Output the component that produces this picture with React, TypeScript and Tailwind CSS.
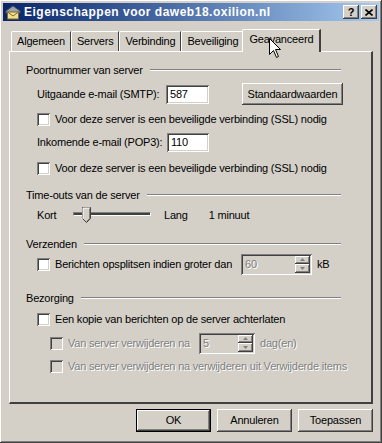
import React from 'react';

const raised =
  'shadow-[inset_-1px_-1px_0_#404040,inset_1px_1px_0_#ffffff,inset_-2px_-2px_0_#808080,inset_2px_2px_0_#d4d0c8]';
const sunken =
  'shadow-[inset_1px_1px_0_#808080,inset_-1px_-1px_0_#ffffff,inset_2px_2px_0_#404040,inset_-2px_-2px_0_#d4d0c8]';
const dis = 'text-[#808080] [text-shadow:1px_1px_0_#ffffff]';

function CheckBox({ disabled }: { disabled?: boolean }) {
  return <div className={`w-[13px] h-[13px] shrink-0 ${disabled ? 'bg-[#d4d0c8]' : 'bg-white'} ${sunken}`} />;
}

function GroupLabel({ text }: { text: string }) {
  return (
    <div className="flex items-center h-[14px] pl-[16px] pr-[30px]">
      <span className="whitespace-nowrap">{text}</span>
      <div className="ml-[7px] flex-1 h-[2px] border-t border-[#808080] border-b border-b-white" />
    </div>
  );
}

function Spinner({ value, width }: { value: string; width: string }) {
  return (
    <div className={`relative h-[21px] bg-[#d4d0c8] ${sunken} ${width} flex items-center`}>
      <span className={`pl-[4px] ${dis}`}>{value}</span>
      <div className="absolute right-[2px] top-[2px] bottom-[2px] w-[15px] flex flex-col">
        <div className={`flex-1 flex items-center justify-center ${raised}`}>
          <svg width="5" height="3" viewBox="0 0 5 3"><path d="M2.5 0 L5 3 L0 3Z" fill="#808080" /></svg>
        </div>
        <div className={`flex-1 flex items-center justify-center ${raised}`}>
          <svg width="5" height="3" viewBox="0 0 5 3"><path d="M0 0 L5 0 L2.5 3Z" fill="#808080" /></svg>
        </div>
      </div>
    </div>
  );
}

function Tab({ label, active }: { label: string; active?: boolean }) {
  if (active) {
    return (
      <div className="relative z-10 -ml-[2px] h-[23px] px-[6px] flex items-start pt-[4px] bg-[#d4d0c8] border-l border-t border-white border-r-2 border-r-[#404040] rounded-tl-[2px] mb-[-1px]">
        {label}
      </div>
    );
  }
  return (
    <div className="h-[20px] px-[5px] flex items-center border-l border-t border-white border-r border-r-[#404040] rounded-tl-[2px] self-end">
      {label}
    </div>
  );
}

function Btn({ label, def }: { label: string; def?: boolean }) {
  return (
    <div className={`w-[75px] h-[23px] flex items-center justify-center ${def ? 'border border-black' : ''}`}>
      <div className={`w-full h-full flex items-center justify-center bg-[#d4d0c8] ${raised}`}>{label}</div>
    </div>
  );
}

export default function App() {
  return (
    <div
      className={`w-[382px] h-[443px] bg-[#d4d0c8] ${raised} p-[3px] flex flex-col text-[11px] tracking-[-0.2px] text-black leading-none`}
      style={{ fontFamily: 'Tahoma, "Liberation Sans", Arial, sans-serif' }}
    >
      {/* title bar */}
      <div className="h-[18px] flex items-center bg-gradient-to-r from-[#0a246a] to-[#a6caf0] pl-[2px] pr-[2px]">
        <svg width="16" height="16" viewBox="0 0 16 16" className="shrink-0">
          <path d="M1 7 L8 2 L15 7 L15 9 L1 9Z" fill="#9aa3ad" stroke="#4a5560" strokeWidth="1" />
          <rect x="2.5" y="8" width="11" height="7" fill="#f4e08a" stroke="#7a6a30" strokeWidth="1" />
          <path d="M2.5 8 L8 12 L13.5 8" fill="none" stroke="#7a6a30" strokeWidth="1" />
        </svg>
        <span className="ml-[3px] text-white font-bold text-[12px] tracking-[0.5px]">Eigenschappen voor daweb18.oxilion.nl</span>
        <div className="ml-auto flex gap-[2px]">
          <div className={`w-[16px] h-[14px] bg-[#d4d0c8] ${raised} flex items-center justify-center font-bold text-[11px]`}>?</div>
          <div className={`w-[16px] h-[14px] bg-[#d4d0c8] ${raised} flex items-center justify-center`}>
            <svg width="8" height="7" viewBox="0 0 8 7"><path d="M0.5 0.5 L7.5 6.5 M7.5 0.5 L0.5 6.5" stroke="black" strokeWidth="1.6" /></svg>
          </div>
        </div>
      </div>

      {/* tabs */}
      <div className="relative mt-[7px] ml-[6px] mr-[6px] flex flex-col">
        <div className="flex h-[23px] items-end pl-[2px]">
          <Tab label="Algemeen" />
          <Tab label="Servers" />
          <Tab label="Verbinding" />
          <Tab label="Beveiliging" />
          <Tab label="Geavanceerd" active />
        </div>
        <div className="h-[353px] border-l border-t border-white border-r-2 border-r-[#404040] border-b-2 border-b-[#404040] flex flex-col">
          <div className="mt-[11px]"><GroupLabel text="Poortnummer van server" /></div>

          <div className="mt-[6px] ml-[27px] flex items-center h-[22px]">
            <span className="w-[129px] whitespace-nowrap">Uitgaande e-mail (SMTP):</span>
            <div className={`w-[43px] h-[19px] bg-white ${sunken} flex items-center pl-[4px]`}>587</div>
            <div className="ml-[33px]"><div className={`w-[101px] h-[22px] flex items-center justify-center ${raised}`}>Standaardwaarden</div></div>
          </div>

          <div className="mt-[7px] ml-[27px] flex items-center h-[14px] gap-[5px]">
            <CheckBox />
            <span className="whitespace-nowrap">Voor deze server is een beveiligde verbinding (SSL) nodig</span>
          </div>

          <div className="mt-[6px] ml-[27px] flex items-center h-[20px]">
            <span className="w-[130px] whitespace-nowrap">Inkomende e-mail (POP3):</span>
            <div className={`w-[42px] h-[19px] bg-white ${sunken} flex items-center pl-[4px]`}>110</div>
          </div>

          <div className="mt-[9px] ml-[27px] flex items-center h-[14px] gap-[5px]">
            <CheckBox />
            <span className="whitespace-nowrap">Voor deze server is een beveiligde verbinding (SSL) nodig</span>
          </div>

          <div className="mt-[13px]"><GroupLabel text="Time-outs van de server" /></div>

          <div className="mt-[4px] ml-[27px] flex items-center h-[18px]">
            <span className="w-[36px]">Kort</span>
            <div className="relative w-[78px] h-[18px]">
              <div className="absolute left-0 right-0 top-[6px] h-[4px] border-t border-l border-[#808080] border-b border-r border-b-white border-r-white bg-[#404040]" />
              <svg className="absolute left-[9px] top-[1px]" width="9" height="16" viewBox="0 0 9 16">
                <path d="M0.5 0.5 L8.5 0.5 L8.5 11.5 L4.5 15.5 L0.5 11.5Z" fill="#d4d0c8" stroke="#404040" strokeWidth="1" />
                <path d="M1 12 L1 1 L8 1" fill="none" stroke="#ffffff" strokeWidth="1" />
                <path d="M7.5 1.5 L7.5 11.5 L4.5 14.5" fill="none" stroke="#808080" strokeWidth="1" />
              </svg>
            </div>
            <span className="ml-[13px]">Lang</span>
            <span className="ml-[21px]">1 minuut</span>
          </div>

          <div className="mt-[13px]"><GroupLabel text="Verzenden" /></div>

          <div className="mt-[2px] ml-[27px] flex items-center h-[22px]">
            <CheckBox />
            <span className="ml-[5px] w-[186px] whitespace-nowrap">Berichten opsplitsen indien groter dan</span>
            <Spinner value="60" width="w-[71px]" />
            <span className="ml-[5px]">kB</span>
          </div>

          <div className="mt-[16px]"><GroupLabel text="Bezorging" /></div>

          <div className="mt-[7px] ml-[27px] flex items-center h-[14px] gap-[5px]">
            <CheckBox />
            <span className="whitespace-nowrap">Een kopie van berichten op de server achterlaten</span>
          </div>

          <div className="mt-[7px] ml-[40px] flex items-center h-[20px]">
            <CheckBox disabled />
            <span className={`ml-[5px] w-[131px] whitespace-nowrap ${dis}`}>Van server verwijderen na</span>
            <Spinner value="5" width="w-[56px]" />
            <span className={`ml-[5px] ${dis}`}>dag(en)</span>
          </div>

          <div className="mt-[6px] ml-[40px] flex items-center h-[14px] gap-[5px]">
            <CheckBox disabled />
            <span className={`whitespace-nowrap ${dis}`}>Van server verwijderen na verwijderen uit Verwijderde items</span>
          </div>
        </div>

        {/* cursor */}
        <svg className="absolute z-20 left-[260px] top-[10px]" width="13" height="21" viewBox="0 0 13 21">
          <path d="M0.5 0.5 L0.5 16.5 L4.5 12.5 L7.5 19.5 L9.5 18.5 L6.5 11.5 L11.5 11.5Z" fill="#ffffff" stroke="#000000" strokeWidth="1" />
        </svg>
      </div>

      <div className="mt-[5px] mr-[6px] flex justify-end gap-[6px]">
        <Btn label="OK" def />
        <Btn label="Annuleren" />
        <Btn label="Toepassen" />
      </div>
    </div>
  );
}
